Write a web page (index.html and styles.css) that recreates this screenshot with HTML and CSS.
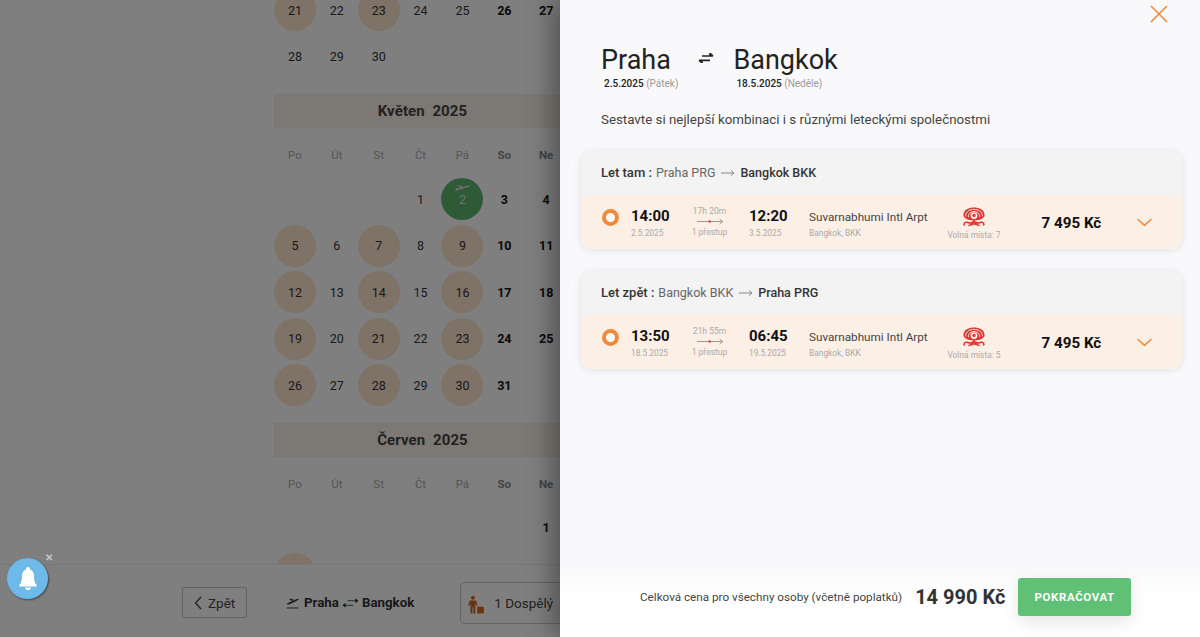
FILE: index.html
```html
<!DOCTYPE html>
<html lang="cs">
<head>
    <meta charset="UTF-8">
    <title>Praha - Bangkok</title>
    <link rel="stylesheet" href="styles.css">
</head>
<body>
    <div class="page">
        <div class="calendar">
            <div class="days">
                <span class="day on">21</span><span class="day">22</span><span class="day on">23</span><span class="day">24</span><span class="day">25</span><span class="day wk">26</span><span class="day wk">27</span>
                <span class="day">28</span><span class="day">29</span><span class="day">30</span>
            </div>

            <div class="month">Květen&nbsp; 2025</div>
            <div class="dow"><span>Po</span><span>Út</span><span>St</span><span>Čt</span><span>Pá</span><span class="wk">So</span><span class="wk">Ne</span></div>
            <div class="days">
                <span class="day"></span><span class="day"></span><span class="day"></span><span class="day">1</span>
                <span class="day picked">
                    <svg class="day-plane" viewBox="0 0 20 10"><path d="M1 8.2 L14 4.2 C16.5 3.4 19 2.6 19.6 1.8 C19.2 1 16.6 1.4 14 2.2 L11 3.1 L5.5 .6 L4 1.1 L8 4 L4.4 5.1 L2.2 4 L1.2 4.4 L2.6 6 Z"/></svg>
                    2
                </span>
                <span class="day wk">3</span><span class="day wk">4</span>
                <span class="day on">5</span><span class="day">6</span><span class="day on">7</span><span class="day">8</span><span class="day on">9</span><span class="day wk">10</span><span class="day wk">11</span>
                <span class="day on">12</span><span class="day">13</span><span class="day on">14</span><span class="day">15</span><span class="day on">16</span><span class="day wk">17</span><span class="day wk">18</span>
                <span class="day on">19</span><span class="day">20</span><span class="day on">21</span><span class="day">22</span><span class="day on">23</span><span class="day wk">24</span><span class="day wk">25</span>
                <span class="day on">26</span><span class="day">27</span><span class="day on">28</span><span class="day">29</span><span class="day on">30</span><span class="day wk">31</span>
            </div>

            <div class="month">Červen&nbsp; 2025</div>
            <div class="dow"><span>Po</span><span>Út</span><span>St</span><span>Čt</span><span>Pá</span><span class="wk">So</span><span class="wk">Ne</span></div>
            <div class="days">
                <span class="day"></span><span class="day"></span><span class="day"></span><span class="day"></span><span class="day"></span><span class="day"></span><span class="day wk">1</span>
                <span class="day on"></span>
            </div>
        </div>

        <div class="bottom-bar">
            <a class="back-btn">
                <svg class="back-icon" viewBox="0 0 8 14"><path d="M7 1 L1.5 7 L7 13"/></svg>
                Zpět
            </a>
            <div class="route">
                <svg class="route-plane" viewBox="0 0 14 13"><path d="M.6 7.4 L10.4 2.6 C12 1.9 13.4 1.6 13.7 2.1 C13.9 2.7 12.4 3.6 11 4.3 L4 7.8 L1.8 8.2 Z M3.6 2.2 L4.8 1.6 L8.4 2.9 L6 4.2 Z"/><path d="M.6 11.4 H13.4 V12.4 H.6 Z"/></svg>
                Praha
                <svg class="route-arrows" viewBox="0 0 18 10"><path d="M17 2.6 H6 M17 2.6 L14.6 .8 V4.4 Z M1 7.4 H12 M1 7.4 L3.4 5.6 V9.2 Z"/></svg>
                Bangkok
            </div>
            <div class="pax">
                <svg class="pax-icon" viewBox="0 0 18 20"><circle cx="5.5" cy="2.4" r="2.2"/><path d="M2 5.4 H9 L11 11 H9.2 L8.2 8.6 V20 H6 V13 H5 V20 H2.8 V8.6 L1.8 11 H0 Z"/><rect x="10.4" y="12.6" width="7.4" height="7.4" rx="1"/></svg>
                1 Dospělý
            </div>
        </div>

        <div class="overlay"></div>

        <div class="bell">
            <svg class="bell-icon" viewBox="0 0 18 24"><path d="M9 0 C7.6 0 6.8 1 7 2.4 C4 3.4 3 6 3 9 C3 13 2.4 15.6 .4 18 V19.4 H17.6 V18 C15.6 15.6 15 13 15 9 C15 6 14 3.4 11 2.4 C11.2 1 10.4 0 9 0 Z M6 20.6 H12 C11.6 22.4 10.4 23.2 9 23.2 C7.6 23.2 6.4 22.4 6 20.6 Z"/></svg>
            <span class="bell-close">✕</span>
        </div>

        <div class="drawer">
            <svg class="close" viewBox="0 0 18 18"><path d="M1 1 L17 17 M17 1 L1 17"/></svg>

            <div class="head">
                <div class="city">
                    <h1>Praha</h1>
                    <p class="city-date"><b>2.5.2025</b> (Pátek)</p>
                </div>
                <svg class="swap" viewBox="0 0 16 10"><path d="M15 3 H4 M15 3 L12 .4 V3 M1 7.4 H12 M1 7.4 L4 9.8 V7.4"/></svg>
                <div class="city">
                    <h1>Bangkok</h1>
                    <p class="city-date"><b>18.5.2025</b> (Neděle)</p>
                </div>
            </div>

            <p class="lead">Sestavte si nejlepší kombinaci i s různými leteckými společnostmi</p>

            <div class="card">
                <div class="card-head">
                    <b class="card-label">Let tam :</b> Praha PRG
                    <svg class="arrow" viewBox="0 0 14 8"><path d="M0 4 H13 M10 1.4 L13 4 L10 6.6"/></svg>
                    <b>Bangkok BKK</b>
                </div>
                <div class="flight">
                    <span class="radio"></span>
                    <div class="time"><strong>14:00</strong><small>2.5.2025</small></div>
                    <div class="stops">
                        <small>17h 20m</small>
                        <svg class="stops-line" viewBox="0 0 28 7"><path class="line" d="M1 3.5 H26.6 M23.6 .8 L26.6 3.5 L23.6 6.2"/><rect class="dot" x="12.6" y="2.4" width="2.2" height="2.2"/></svg>
                        <small>1 přestup</small>
                    </div>
                    <div class="time"><strong>12:20</strong><small>3.5.2025</small></div>
                    <div class="airport"><span>Suvarnabhumi Intl Arpt</span><small>Bangkok, BKK</small></div>
                    <div class="airline">
                        <svg class="logo" viewBox="0 0 24 20"><path class="logo-dome" d="M1.4 8 C1.4 2.6 7 .4 12 .4 C17 .4 22.6 2.6 22.6 8 C22.6 11 19 13.4 12 13.4 C5 13.4 1.4 11 1.4 8 Z"/><path class="logo-stripe" d="M3.6 9.4 C3.6 4.4 8 2.4 12 2.4 C16 2.4 20.4 4.4 20.4 9.4 M6.4 10 C6.2 6.4 9 4.6 12 4.6 C15 4.6 17.8 6.4 17.6 10"/><circle class="logo-hole" cx="12" cy="8.6" r="3.4"/><circle class="logo-dot" cx="12" cy="8.4" r="1.7"/><path class="logo-arc" d="M12 13.4 C11 16.4 8 16.2 5.4 15.4 C3 14.8 1.2 16.4 2.6 18.6 M12 13.4 C13 16.4 16 16.2 18.6 15.4 C21 14.8 22.8 16.4 21.4 18.6 M6.4 18.6 C8.4 17.6 10.6 17.8 12 16.4 C13.4 17.8 15.6 17.6 17.6 18.6"/></svg>
                        <small>Volná místa: 7</small>
                    </div>
                    <div class="price">7 495 Kč</div>
                    <svg class="chevron" viewBox="0 0 16 9"><path d="M1 1 L8 7.4 L15 1"/></svg>
                </div>
            </div>

            <div class="card">
                <div class="card-head">
                    <b class="card-label">Let zpět :</b> Bangkok BKK
                    <svg class="arrow" viewBox="0 0 14 8"><path d="M0 4 H13 M10 1.4 L13 4 L10 6.6"/></svg>
                    <b>Praha PRG</b>
                </div>
                <div class="flight">
                    <span class="radio"></span>
                    <div class="time"><strong>13:50</strong><small>18.5.2025</small></div>
                    <div class="stops">
                        <small>21h 55m</small>
                        <svg class="stops-line" viewBox="0 0 28 7"><path class="line" d="M1 3.5 H26.6 M23.6 .8 L26.6 3.5 L23.6 6.2"/><rect class="dot" x="12.6" y="2.4" width="2.2" height="2.2"/></svg>
                        <small>1 přestup</small>
                    </div>
                    <div class="time"><strong>06:45</strong><small>19.5.2025</small></div>
                    <div class="airport"><span>Suvarnabhumi Intl Arpt</span><small>Bangkok, BKK</small></div>
                    <div class="airline">
                        <svg class="logo" viewBox="0 0 24 20"><path class="logo-dome" d="M1.4 8 C1.4 2.6 7 .4 12 .4 C17 .4 22.6 2.6 22.6 8 C22.6 11 19 13.4 12 13.4 C5 13.4 1.4 11 1.4 8 Z"/><path class="logo-stripe" d="M3.6 9.4 C3.6 4.4 8 2.4 12 2.4 C16 2.4 20.4 4.4 20.4 9.4 M6.4 10 C6.2 6.4 9 4.6 12 4.6 C15 4.6 17.8 6.4 17.6 10"/><circle class="logo-hole" cx="12" cy="8.6" r="3.4"/><circle class="logo-dot" cx="12" cy="8.4" r="1.7"/><path class="logo-arc" d="M12 13.4 C11 16.4 8 16.2 5.4 15.4 C3 14.8 1.2 16.4 2.6 18.6 M12 13.4 C13 16.4 16 16.2 18.6 15.4 C21 14.8 22.8 16.4 21.4 18.6 M6.4 18.6 C8.4 17.6 10.6 17.8 12 16.4 C13.4 17.8 15.6 17.6 17.6 18.6"/></svg>
                        <small>Volná místa: 5</small>
                    </div>
                    <div class="price">7 495 Kč</div>
                    <svg class="chevron" viewBox="0 0 16 9"><path d="M1 1 L8 7.4 L15 1"/></svg>
                </div>
            </div>

            <div class="footer">
                <span class="total-label">Celková cena pro všechny osoby (včetně poplatků)</span>
                <span class="total">14 990 Kč</span>
                <button class="go">POKRAČOVAT</button>
            </div>
        </div>
    </div>
</body>
</html>
```

FILE: styles.css
```css
* { box-sizing: border-box; }
html, body { margin: 0; height: 100%; overflow: hidden; }
body { font-family: Roboto, "Liberation Sans", sans-serif; color: #222; background: #fff; }
small { display: block; }
p, h1 { margin: 0; }

.page { position: relative; width: 1200px; height: 637px; overflow: hidden; display: flex; flex-direction: column; }

/* calendar behind the drawer */
.calendar { height: 564px; overflow: hidden; padding: 0 0 0 274px; margin: 0; }
.days { display: grid; grid-template-columns: repeat(7, 41.86px); grid-auto-rows: 46.5px; width: 293px; }
.calendar > .days:first-child { margin-top: -13px; }
.day { position: relative; width: 42px; height: 42px; margin-top: 2px; border-radius: 50%; display: flex; align-items: center; justify-content: center; font-size: 12.5px; color: #333; }
.day.on { background: #ffe4ce; }
.day.wk { font-weight: 700; color: #111; }
.day.picked { background: #5cb56a; color: #ddd; }
.day-plane { position: absolute; top: 6px; left: 13px; width: 17px; height: 9px; fill: #ddd; }
.month { height: 34px; width: 297px; margin-top: 14px; background: #f8f0e6; display: flex; align-items: center; justify-content: center; font-size: 15px; font-weight: 700; color: #444; letter-spacing: .1px; }
.dow { display: grid; grid-template-columns: repeat(7, 41.86px); width: 293px; height: 48px; padding-top: 20px; text-align: center; font-size: 11.5px; color: #aaa; }
.dow .wk { font-weight: 700; color: #888; }

.bottom-bar { height: 73px; border-top: 1px solid #eee; background: #fff; display: flex; align-items: center; padding-left: 182px; }
.back-btn { display: flex; align-items: center; gap: 6px; width: 65px; height: 31px; margin-top: 3px; padding-left: 11px; border: 1px solid #c4c4c4; border-radius: 2px; font-size: 13.5px; color: #444; }
.back-icon { width: 8px; height: 14px; fill: none; stroke: #444; stroke-width: 1.3; }
.route { display: flex; align-items: center; gap: 3px; margin-left: 39px; font-size: 13.3px; font-weight: 700; color: #333; margin-top: 3px; }
.route-plane { width: 13px; height: 12px; margin-right: 2px; fill: #333; }
.route-arrows { width: 17px; height: 10px; fill: #333; stroke: #333; stroke-width: .9; }
.pax { display: flex; align-items: center; gap: 10px; width: 200px; height: 42px; margin-left: 46px; margin-top: 3px; padding-left: 7px; border: 1px solid #c8c8c8; border-radius: 4px; font-size: 13.5px; color: #444; flex-shrink: 0; }
.pax-icon { width: 16px; height: 19px; margin-top: 4px; fill: #d2661a; }

.overlay { position: absolute; inset: 0; background: rgba(0, 0, 0, .5); }

.bell { position: absolute; left: 7px; top: 558px; width: 41px; height: 41px; border-radius: 50%; background: #6db9ea; box-shadow: 1px 1px 2px rgba(0, 0, 0, .45); display: flex; align-items: center; justify-content: center; }
.bell-icon { width: 18px; height: 24px; fill: #fff; }
.bell-close { position: absolute; left: 38px; top: -6px; font-size: 10px; font-weight: 700; color: #c8c8c8; }

/* right drawer */
.drawer { position: absolute; top: 0; right: 0; bottom: 0; width: 640px; background: #f9f9fb; box-shadow: -8px 0 24px rgba(0, 0, 0, .35); padding: 45px 18px 0 21px; display: flex; flex-direction: column; }
.close { position: absolute; top: 5px; right: 32px; width: 18px; height: 18px; fill: none; stroke: #f08a3c; stroke-width: 1.6; }
.head { display: flex; align-items: flex-start; padding-left: 20px; }
.city h1 { font-size: 27px; line-height: 30px; font-weight: 400; color: #222; }
.city-date { margin-top: 2px; padding-left: 3px; font-size: 10px; line-height: 13px; color: #999; }
.city-date b { font-weight: 500; color: #222; }
.swap { width: 16px; height: 10px; margin: 8px 19px 0 20px; fill: none; stroke: #222; stroke-width: 1.6; }
.lead { margin: 21px 0 22px 20px; font-size: 13.33px; line-height: 18px; color: #444; }

.card { margin-bottom: 22px; border-radius: 10px; overflow: hidden; box-shadow: 0 1px 8px rgba(0, 0, 0, .1); }
.card-head { height: 44px; padding: 0 0 1px 20px; background: #f3f3f3; display: flex; align-items: center; gap: 4px; font-size: 12.5px; color: #666; }
.card-head b { font-weight: 500; color: #333; }
.card-head .card-label { font-size: 13px; }
.arrow { width: 14px; height: 8px; margin: 0 1px 0 2px; fill: none; stroke: #888; stroke-width: 1; }
.flight { height: 54px; background: #fcefe6; display: flex; align-items: center; padding-left: 21px; }
.radio { width: 17px; height: 17px; margin-top: -9px; border: 4px solid #f08a3c; border-radius: 50%; background: #fff; flex-shrink: 0; }
.time { margin-left: 12px; width: 50px; padding-top: 1px; }
.time strong { display: block; font-size: 15px; line-height: 19px; font-weight: 700; color: #111; }
.time small { margin-top: 1px; font-size: 8.3px; line-height: 12px; color: #aaa; }
.stops { width: 38px; margin: 0 8.5px 0 9.5px; text-align: center; white-space: nowrap; display: flex; flex-direction: column; align-items: center; }
.stops small { font-size: 8.5px; line-height: 11px; color: #aaa; }
.stops-line { width: 28px; height: 7px; margin: 1px 0 2px; }
.line { fill: none; stroke: #999; stroke-width: 1; }
.dot { fill: #e23b3b; }
.airport { margin-left: 10px; width: 130px; padding-top: 3px; white-space: nowrap; }
.airport span { display: block; font-size: 11.7px; line-height: 17px; color: #444; }
.airport small { margin-top: 1px; font-size: 8.4px; line-height: 12px; color: #aaa; }
.airline { width: 70px; padding-top: 4px; display: flex; flex-direction: column; align-items: center; white-space: nowrap; }
.logo { width: 24px; height: 20px; }
.logo-dome { fill: #dd3a36; }
.logo-stripe { fill: none; stroke: #fcefe6; stroke-width: .9; }
.logo-hole { fill: #fcefe6; }
.logo-arc { fill: none; stroke: #dd3a36; stroke-width: 1.6; }
.logo-dot { fill: #dd3a36; }
.airline small { margin-top: 3px; font-size: 8.4px; line-height: 11px; color: #aaa; }
.price { margin-left: 32.5px; width: 94px; padding-top: 1px; font-size: 15.2px; font-weight: 700; color: #111; white-space: nowrap; }
.chevron { width: 17px; height: 9px; fill: none; stroke: #f08a3c; stroke-width: 1.5; }

.footer { position: absolute; left: 0; right: 0; bottom: 0; height: 70px; padding: 0 69px 11px 80px; background: linear-gradient(#f9f9fb, #fff 40%); display: flex; align-items: center; }
.total-label { font-size: 11.7px; color: #444; white-space: nowrap; }
.total { margin-left: 13px; font-size: 20px; font-weight: 700; color: #333; white-space: nowrap; }
.go { margin-left: 13px; width: 113px; height: 38px; border: none; border-radius: 3px; background: #5fc076; color: #fff; font: 700 11.5px Roboto, sans-serif; letter-spacing: .6px; box-shadow: 0 6px 18px rgba(0, 0, 0, .1); }
```
